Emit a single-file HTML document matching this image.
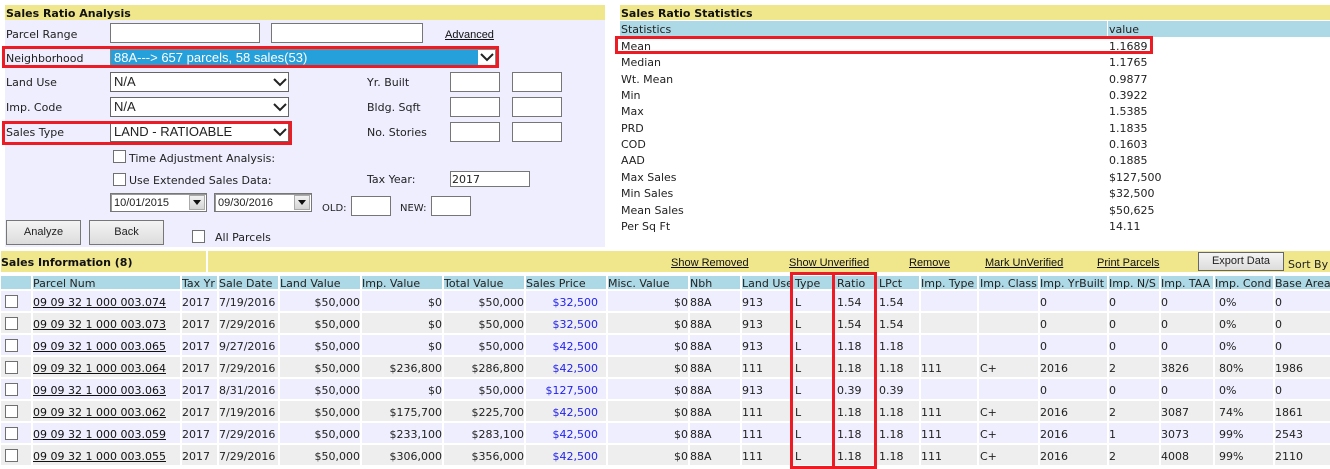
<!DOCTYPE html>
<html><head><meta charset="utf-8"><style>
html,body{margin:0;padding:0;background:#fff}
body{width:1330px;height:469px;position:relative;overflow:hidden;font:11px/13px "DejaVu Sans",Verdana,sans-serif;color:#222}
.a{position:absolute;white-space:nowrap}
.t{position:absolute;white-space:nowrap;line-height:14px;margin-top:1px}
.y{position:absolute;background:#f0e68c}
.b{font-weight:bold;color:#111}
.i{position:absolute;background:#fff;border:1px solid #767676;box-sizing:border-box}
.s{position:absolute;background:#fff;border:1px solid #666;box-sizing:border-box;font:13px/18px "Liberation Sans",Arial,sans-serif;padding-left:3px;color:#222;white-space:nowrap}
.s svg{position:absolute;right:0;top:3px}
.c{position:absolute;width:13px;height:13px;background:#fff;border:1px solid #707070;box-sizing:border-box}
.btn{position:absolute;box-sizing:border-box;border:1px solid #777;background:linear-gradient(#f4f4f4,#dcdcdc);font:11px/22px "Liberation Sans",Arial,sans-serif;text-align:center;color:#222}
.u{text-decoration:underline;color:#111}
.l{font:11px/14px "Liberation Sans",Arial,sans-serif}
.r{position:absolute;border:3px solid #ed1c24;box-sizing:border-box}
.dp{position:absolute;background:#fff;border:1px solid #777;box-shadow:inset 1px 1px 0 #999;box-sizing:border-box;font:11px/19px "Liberation Sans",Arial,sans-serif;padding-left:3px;color:#222}
.dp i{position:absolute;right:1px;top:1px;width:16px;height:15px;background:linear-gradient(#f2f2f2,#d4d4d4);border:1px solid #aaa;box-sizing:border-box}
.dp i:after{content:"";position:absolute;left:3px;top:4px;border:4px solid transparent;border-top:5px solid #111;border-bottom:0}
table{position:absolute;left:-1px;top:274px;border-collapse:separate;border-spacing:2px;table-layout:fixed;width:1343px}
th,td{padding:0;overflow:hidden;white-space:nowrap;font-weight:normal;text-align:left;box-sizing:border-box;color:#222}
th{background:#add8e6;height:13px;line-height:11px;padding-top:2px}
td{height:20px;line-height:16px;padding-top:4px;background:#eef}
tr.g td{background:#eee}
th:nth-child(12),td:nth-child(12),th:nth-child(13),td:nth-child(13){padding-left:3px}
th:nth-child(14),td:nth-child(14){padding-left:2px}
th:nth-child(16),td:nth-child(16){padding-left:1px}
td.m{text-align:right}
td.p{text-align:right;padding-right:8px;color:#2222ee}
td.k{text-align:left;padding-left:4px}
td a{color:#111;text-decoration:underline}
td.x{position:relative;padding:0}
td.x div{position:absolute;left:4px;top:4px;width:13px;height:13px;background:#fff;border:1px solid #707070;box-sizing:border-box}
</style></head><body>

<div class="a" style="left:5px;top:5px;width:600px;height:242px;background:#eef"></div>
<div class="y" style="left:5px;top:5px;width:600px;height:15px"></div>
<div class="t b" style="left:6px;top:6px">Sales Ratio Analysis</div>

<div class="t" style="left:6px;top:27px">Parcel Range</div>
<div class="i" style="left:110px;top:23px;width:150px;height:20px"></div>
<div class="i" style="left:271px;top:23px;width:152px;height:20px"></div>
<div class="a l u" style="left:445px;top:28px">Advanced</div>

<div class="t" style="left:6px;top:51px">Neighborhood</div>
<div class="s" style="left:110px;top:49px;width:386px;height:17px;line-height:15px;background:#fff;padding-left:0;border-color:#888">
<div style="position:absolute;left:0;top:0;width:367px;height:15px;background:#26a0da;color:#fff;padding-left:3px;box-sizing:border-box">88A---&gt; 657 parcels, 58 sales(53)</div>
<svg width="16" height="12" style="top:1px"><path d="M2 3L8 9L14 3" fill="none" stroke="#222" stroke-width="2"/></svg></div>

<div class="t" style="left:6px;top:75px">Land Use</div>
<div class="s" style="left:110px;top:72px;width:179px;height:20px">N/A<svg width="16" height="12"><path d="M2 3L8 9L14 3" fill="none" stroke="#222" stroke-width="2"/></svg></div>
<div class="t" style="left:6px;top:100px">Imp. Code</div>
<div class="s" style="left:110px;top:97px;width:179px;height:20px">N/A<svg width="16" height="12"><path d="M2 3L8 9L14 3" fill="none" stroke="#222" stroke-width="2"/></svg></div>
<div class="t" style="left:6px;top:125px">Sales Type</div>
<div class="s" style="left:110px;top:122px;width:179px;height:20px">LAND - RATIOABLE<svg width="16" height="12"><path d="M2 3L8 9L14 3" fill="none" stroke="#222" stroke-width="2"/></svg></div>

<div class="t" style="left:367px;top:75px">Yr. Built</div>
<div class="t" style="left:367px;top:100px">Bldg. Sqft</div>
<div class="t" style="left:367px;top:125px">No. Stories</div>
<div class="i" style="left:450px;top:72px;width:50px;height:20px"></div>
<div class="i" style="left:512px;top:72px;width:50px;height:20px"></div>
<div class="i" style="left:450px;top:97px;width:50px;height:20px"></div>
<div class="i" style="left:512px;top:97px;width:50px;height:20px"></div>
<div class="i" style="left:450px;top:122px;width:50px;height:20px"></div>
<div class="i" style="left:512px;top:122px;width:50px;height:20px"></div>

<div class="c" style="left:113px;top:150px"></div>
<div class="t" style="left:129px;top:151px">Time Adjustment Analysis:</div>
<div class="c" style="left:113px;top:173px"></div>
<div class="t" style="left:129px;top:173px">Use Extended Sales Data:</div>
<div class="t" style="left:367px;top:172px">Tax Year:</div>
<div class="i" style="left:450px;top:171px;width:80px;height:16px;font-size:11px;line-height:16px;padding-left:1px;color:#222">2017</div>

<div class="dp" style="left:110px;top:193px;width:97px;height:19px">10/01/2015<i></i></div>
<div class="dp" style="left:214px;top:193px;width:98px;height:19px">09/30/2016<i></i></div>
<div class="t" style="left:322px;top:201px;font-size:10px">OLD:</div>
<div class="i" style="left:351px;top:196px;width:40px;height:20px"></div>
<div class="t" style="left:400px;top:201px;font-size:10px">NEW:</div>
<div class="i" style="left:431px;top:196px;width:40px;height:20px"></div>

<div class="btn" style="left:6px;top:220px;width:75px;height:25px">Analyze</div>
<div class="btn" style="left:89px;top:220px;width:75px;height:25px">Back</div>
<div class="c" style="left:192px;top:230px"></div>
<div class="t" style="left:215px;top:230px">All Parcels</div>

<div class="y" style="left:620px;top:5px;width:710px;height:15px"></div>
<div class="t b" style="left:621px;top:6px">Sales Ratio Statistics</div>
<div class="a" style="left:620px;top:21px;width:487px;height:16px;background:#add8e6"></div>
<div class="a" style="left:1108px;top:21px;width:222px;height:16px;background:#add8e6"></div>
<div class="t" style="left:621px;top:22px">Statistics</div>
<div class="t" style="left:1109px;top:22px">value</div>
<div class="t" style="left:621px;top:39px">Mean</div><div class="t" style="left:1109px;top:39px">1.1689</div>
<div class="t" style="left:621px;top:55px">Median</div><div class="t" style="left:1109px;top:55px">1.1765</div>
<div class="t" style="left:621px;top:72px">Wt. Mean</div><div class="t" style="left:1109px;top:72px">0.9877</div>
<div class="t" style="left:621px;top:88px">Min</div><div class="t" style="left:1109px;top:88px">0.3922</div>
<div class="t" style="left:621px;top:104px">Max</div><div class="t" style="left:1109px;top:104px">1.5385</div>
<div class="t" style="left:621px;top:121px">PRD</div><div class="t" style="left:1109px;top:121px">1.1835</div>
<div class="t" style="left:621px;top:137px">COD</div><div class="t" style="left:1109px;top:137px">0.1603</div>
<div class="t" style="left:621px;top:153px">AAD</div><div class="t" style="left:1109px;top:153px">0.1885</div>
<div class="t" style="left:621px;top:170px">Max Sales</div><div class="t" style="left:1109px;top:170px">$127,500</div>
<div class="t" style="left:621px;top:186px">Min Sales</div><div class="t" style="left:1109px;top:186px">$32,500</div>
<div class="t" style="left:621px;top:203px">Mean Sales</div><div class="t" style="left:1109px;top:203px">$50,625</div>
<div class="t" style="left:621px;top:219px">Per Sq Ft</div><div class="t" style="left:1109px;top:219px">14.11</div>

<div class="y" style="left:1px;top:251px;width:205px;height:21px"></div>
<div class="y" style="left:208px;top:251px;width:1122px;height:21px"></div>
<div class="t b" style="left:1px;top:255px">Sales Information (8)</div>
<div class="a l u" style="left:671px;top:256px">Show Removed</div>
<div class="a l u" style="left:789px;top:256px">Show Unverified</div>
<div class="a l u" style="left:909px;top:256px">Remove</div>
<div class="a l u" style="left:985px;top:256px">Mark UnVerified</div>
<div class="a l u" style="left:1097px;top:256px">Print Parcels</div>
<div class="btn" style="left:1198px;top:252px;width:86px;height:19px;line-height:17px;border-color:#666">Export Data</div>
<div class="t" style="left:1288px;top:257px">Sort By</div>

<table>
<colgroup><col style="width:30px"><col style="width:147px"><col style="width:35px"><col style="width:59px"><col style="width:80px"><col style="width:80px"><col style="width:80px"><col style="width:80px"><col style="width:80px"><col style="width:50px"><col style="width:48px"><col style="width:40px"><col style="width:41px"><col style="width:42px"><col style="width:56px"><col style="width:59px"><col style="width:67px"><col style="width:50px"><col style="width:52px"><col style="width:58px"><col style="width:65px"></colgroup>
<tr><th></th><th>Parcel Num</th><th>Tax Yr</th><th>Sale Date</th><th>Land Value</th><th>Imp. Value</th><th>Total Value</th><th>Sales Price</th><th>Misc. Value</th><th>Nbh</th><th>Land Use</th><th>Type</th><th>Ratio</th><th>LPct</th><th>Imp. Type</th><th>Imp. Class</th><th>Imp. YrBuilt</th><th>Imp. N/S</th><th>Imp. TAA</th><th>Imp. Cond</th><th>Base Area</th></tr>
<tr><td class="x"><div></div></td><td><a>09 09 32 1 000 003.074</a></td><td>2017</td><td>7/19/2016</td><td class="m">$50,000</td><td class="m">$0</td><td class="m">$50,000</td><td class="p">$32,500</td><td class="m">$0</td><td>88A</td><td>913</td><td>L</td><td>1.54</td><td>1.54</td><td></td><td></td><td>0</td><td>0</td><td>0</td><td class="k">0%</td><td>0</td></tr>
<tr class="g"><td class="x"><div></div></td><td><a>09 09 32 1 000 003.073</a></td><td>2017</td><td>7/29/2016</td><td class="m">$50,000</td><td class="m">$0</td><td class="m">$50,000</td><td class="p">$32,500</td><td class="m">$0</td><td>88A</td><td>913</td><td>L</td><td>1.54</td><td>1.54</td><td></td><td></td><td>0</td><td>0</td><td>0</td><td class="k">0%</td><td>0</td></tr>
<tr><td class="x"><div></div></td><td><a>09 09 32 1 000 003.065</a></td><td>2017</td><td>9/27/2016</td><td class="m">$50,000</td><td class="m">$0</td><td class="m">$50,000</td><td class="p">$42,500</td><td class="m">$0</td><td>88A</td><td>913</td><td>L</td><td>1.18</td><td>1.18</td><td></td><td></td><td>0</td><td>0</td><td>0</td><td class="k">0%</td><td>0</td></tr>
<tr class="g"><td class="x"><div></div></td><td><a>09 09 32 1 000 003.064</a></td><td>2017</td><td>7/29/2016</td><td class="m">$50,000</td><td class="m">$236,800</td><td class="m">$286,800</td><td class="p">$42,500</td><td class="m">$0</td><td>88A</td><td>111</td><td>L</td><td>1.18</td><td>1.18</td><td>111</td><td>C+</td><td>2016</td><td>2</td><td>3826</td><td class="k">80%</td><td>1986</td></tr>
<tr><td class="x"><div></div></td><td><a>09 09 32 1 000 003.063</a></td><td>2017</td><td>8/31/2016</td><td class="m">$50,000</td><td class="m">$0</td><td class="m">$50,000</td><td class="p">$127,500</td><td class="m">$0</td><td>88A</td><td>913</td><td>L</td><td>0.39</td><td>0.39</td><td></td><td></td><td>0</td><td>0</td><td>0</td><td class="k">0%</td><td>0</td></tr>
<tr class="g"><td class="x"><div></div></td><td><a>09 09 32 1 000 003.062</a></td><td>2017</td><td>7/19/2016</td><td class="m">$50,000</td><td class="m">$175,700</td><td class="m">$225,700</td><td class="p">$42,500</td><td class="m">$0</td><td>88A</td><td>111</td><td>L</td><td>1.18</td><td>1.18</td><td>111</td><td>C+</td><td>2016</td><td>2</td><td>3087</td><td class="k">74%</td><td>1861</td></tr>
<tr><td class="x"><div></div></td><td><a>09 09 32 1 000 003.059</a></td><td>2017</td><td>7/29/2016</td><td class="m">$50,000</td><td class="m">$233,100</td><td class="m">$283,100</td><td class="p">$42,500</td><td class="m">$0</td><td>88A</td><td>111</td><td>L</td><td>1.18</td><td>1.18</td><td>111</td><td>C+</td><td>2016</td><td>1</td><td>3073</td><td class="k">99%</td><td>2543</td></tr>
<tr class="g"><td class="x"><div></div></td><td><a>09 09 32 1 000 003.055</a></td><td>2017</td><td>7/29/2016</td><td class="m">$50,000</td><td class="m">$306,000</td><td class="m">$356,000</td><td class="p">$42,500</td><td class="m">$0</td><td>88A</td><td>111</td><td>L</td><td>1.18</td><td>1.18</td><td>111</td><td>C+</td><td>2016</td><td>2</td><td>4008</td><td class="k">99%</td><td>2110</td></tr>
</table>

<div class="r" style="left:2px;top:46px;width:497px;height:22px"></div>
<div class="r" style="left:2px;top:121px;width:290px;height:24px"></div>
<div class="r" style="left:615px;top:36px;width:538px;height:18px"></div>
<div class="r" style="left:790px;top:272px;width:45px;height:197px"></div>
<div class="r" style="left:832px;top:272px;width:45px;height:197px"></div>
</body></html>
